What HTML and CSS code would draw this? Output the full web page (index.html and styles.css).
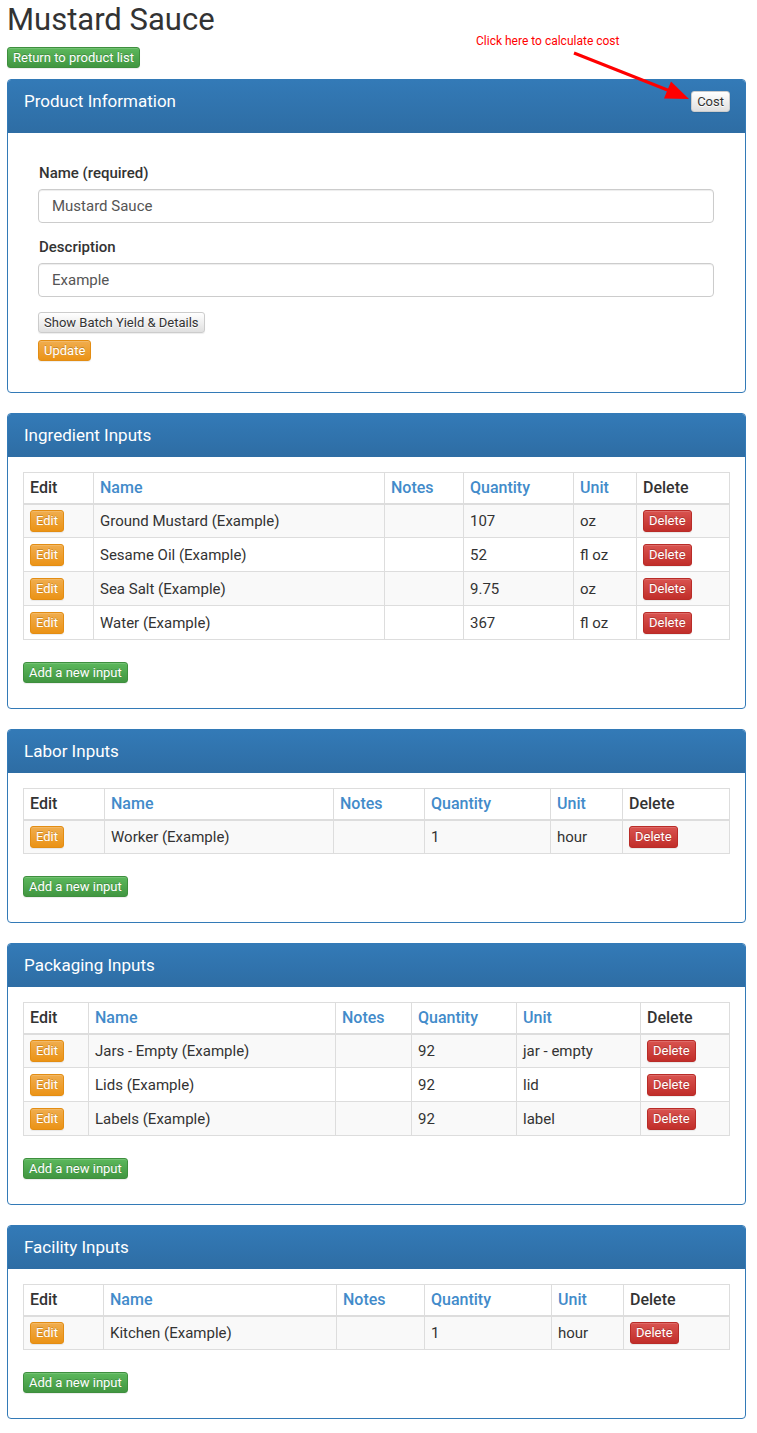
FILE: index.html
```html
<!DOCTYPE html>
<html lang="en">
<head>
<meta charset="utf-8">
<title>Mustard Sauce</title>
<link rel="stylesheet" href="styles.css">
</head>
<body>
<div class="page">
  <h1 class="title">Mustard Sauce</h1>
  <button class="btn btn-success">Return to product list</button>

  <div class="annot">Click here to calculate cost</div>
  <svg class="arrow" width="757" height="120" viewBox="0 0 757 120">
    <line x1="574" y1="53" x2="670" y2="91" stroke="#f00" stroke-width="3"/>
    <polygon points="664,98.5 671,81.5 689,99" fill="#f00"/>
  </svg>

  <section class="panel">
    <div class="panel-heading heading-tall">
      <h3 class="panel-title">Product Information</h3>
      <button class="btn btn-default">Cost</button>
    </div>
    <div class="panel-body form-body">
      <label class="field-label">Name (required)</label>
      <input class="field-input" type="text" value="Mustard Sauce">
      <label class="field-label">Description</label>
      <input class="field-input" type="text" value="Example">
      <div class="form-actions">
        <button class="btn btn-default">Show Batch Yield &amp; Details</button>
        <button class="btn btn-warning">Update</button>
      </div>
    </div>
  </section>

  <section class="panel">
    <div class="panel-heading">
      <h3 class="panel-title">Ingredient Inputs</h3>
    </div>
    <div class="panel-body">
      <table class="grid t-ing">
        <colgroup><col><col><col><col><col><col></colgroup>
        <thead>
          <tr><th>Edit</th><th class="lnk">Name</th><th class="lnk">Notes</th><th class="lnk">Quantity</th><th class="lnk">Unit</th><th>Delete</th></tr>
        </thead>
        <tbody>
          <tr><td><button class="btn btn-warning">Edit</button></td><td>Ground Mustard (Example)</td><td></td><td>107</td><td>oz</td><td><button class="btn btn-danger">Delete</button></td></tr>
          <tr><td><button class="btn btn-warning">Edit</button></td><td>Sesame Oil (Example)</td><td></td><td>52</td><td>fl oz</td><td><button class="btn btn-danger">Delete</button></td></tr>
          <tr><td><button class="btn btn-warning">Edit</button></td><td>Sea Salt (Example)</td><td></td><td>9.75</td><td>oz</td><td><button class="btn btn-danger">Delete</button></td></tr>
          <tr><td><button class="btn btn-warning">Edit</button></td><td>Water (Example)</td><td></td><td>367</td><td>fl oz</td><td><button class="btn btn-danger">Delete</button></td></tr>
        </tbody>
      </table>
      <button class="btn btn-success add-btn">Add a new input</button>
    </div>
  </section>

  <section class="panel">
    <div class="panel-heading">
      <h3 class="panel-title">Labor Inputs</h3>
    </div>
    <div class="panel-body">
      <table class="grid t-lab">
        <colgroup><col><col><col><col><col><col></colgroup>
        <thead>
          <tr><th>Edit</th><th class="lnk">Name</th><th class="lnk">Notes</th><th class="lnk">Quantity</th><th class="lnk">Unit</th><th>Delete</th></tr>
        </thead>
        <tbody>
          <tr><td><button class="btn btn-warning">Edit</button></td><td>Worker (Example)</td><td></td><td>1</td><td>hour</td><td><button class="btn btn-danger">Delete</button></td></tr>
        </tbody>
      </table>
      <button class="btn btn-success add-btn">Add a new input</button>
    </div>
  </section>

  <section class="panel">
    <div class="panel-heading">
      <h3 class="panel-title">Packaging Inputs</h3>
    </div>
    <div class="panel-body">
      <table class="grid t-pack">
        <colgroup><col><col><col><col><col><col></colgroup>
        <thead>
          <tr><th>Edit</th><th class="lnk">Name</th><th class="lnk">Notes</th><th class="lnk">Quantity</th><th class="lnk">Unit</th><th>Delete</th></tr>
        </thead>
        <tbody>
          <tr><td><button class="btn btn-warning">Edit</button></td><td>Jars - Empty (Example)</td><td></td><td>92</td><td>jar - empty</td><td><button class="btn btn-danger">Delete</button></td></tr>
          <tr><td><button class="btn btn-warning">Edit</button></td><td>Lids (Example)</td><td></td><td>92</td><td>lid</td><td><button class="btn btn-danger">Delete</button></td></tr>
          <tr><td><button class="btn btn-warning">Edit</button></td><td>Labels (Example)</td><td></td><td>92</td><td>label</td><td><button class="btn btn-danger">Delete</button></td></tr>
        </tbody>
      </table>
      <button class="btn btn-success add-btn">Add a new input</button>
    </div>
  </section>

  <section class="panel">
    <div class="panel-heading">
      <h3 class="panel-title">Facility Inputs</h3>
    </div>
    <div class="panel-body">
      <table class="grid t-fac">
        <colgroup><col><col><col><col><col><col></colgroup>
        <thead>
          <tr><th>Edit</th><th class="lnk">Name</th><th class="lnk">Notes</th><th class="lnk">Quantity</th><th class="lnk">Unit</th><th>Delete</th></tr>
        </thead>
        <tbody>
          <tr><td><button class="btn btn-warning">Edit</button></td><td>Kitchen (Example)</td><td></td><td>1</td><td>hour</td><td><button class="btn btn-danger">Delete</button></td></tr>
        </tbody>
      </table>
      <button class="btn btn-success add-btn">Add a new input</button>
    </div>
  </section>
</div>
</body>
</html>
```

FILE: styles.css
```css
* { box-sizing: border-box; }

html, body {
  margin: 0;
  padding: 0;
  background: #fff;
}

body {
  font-family: Roboto, "Liberation Sans", sans-serif;
  font-size: 15px;
  color: #333;
}

.page {
  position: relative;
  width: 757px;
  padding: 2px 11px 12px 7px;
}

.title {
  margin: 0 0 9px 0;
  font-size: 31px;
  line-height: 36px;
  font-weight: 400;
  color: #333;
}

/* Buttons */
.btn {
  display: inline-block;
  height: 21px;
  padding: 0 5px;
  font-family: Roboto, "Liberation Sans", sans-serif;
  font-size: 13px;
  line-height: 19px;
  border: 1px solid #ccc;
  border-radius: 3px;
  cursor: pointer;
  white-space: nowrap;
  vertical-align: middle;
  box-shadow: inset 0 1px 0 rgba(255,255,255,.15), 0 1px 1px rgba(0,0,0,.075);
}

.btn-default {
  color: #333;
  background: linear-gradient(#ffffff, #e0e0e0);
  border-color: #ccc;
  text-shadow: 0 1px 0 #fff;
}

.btn-success {
  color: #fff;
  background: linear-gradient(#5cb85c, #419641);
  border-color: #3e8f3e;
  text-shadow: 0 -1px 0 rgba(0,0,0,.2);
}

.btn-warning {
  color: #fff;
  background: linear-gradient(#f0ad4e, #eb9316);
  border-color: #e38d13;
  text-shadow: 0 -1px 0 rgba(0,0,0,.2);
}

.btn-danger {
  color: #fff;
  background: linear-gradient(#d9534f, #c12e2a);
  border-color: #b92c28;
  text-shadow: 0 -1px 0 rgba(0,0,0,.2);
}

/* Annotation overlay */
.annot {
  position: absolute;
  left: 476px;
  top: 33px;
  font-size: 12px;
  line-height: 16px;
  color: #f00;
  white-space: nowrap;
}

.arrow {
  position: absolute;
  left: 0;
  top: 0;
  pointer-events: none;
  z-index: 5;
}

/* Panels */
.panel {
  width: 739px;
  margin: 11px 0 20px 0;
  border: 1px solid #337ab7;
  border-radius: 4px;
  background: #fff;
  overflow: hidden;
}

.panel + .panel { margin-top: 0; }

.panel-heading {
  display: flex;
  justify-content: space-between;
  align-items: flex-start;
  padding: 11px 15px 12px 16px;
  background: linear-gradient(#337ab7, #2e6da4);
  color: #fff;
}

.heading-tall {
  padding-bottom: 21px;
}

.panel-title {
  margin: 0;
  font-size: 17px;
  line-height: 20px;
  font-weight: 400;
}

.panel-body {
  padding: 15px 16px 25px 15px;
}

/* Product form */
.form-body {
  padding: 30px 31px 31px 30px;
}

.field-label {
  display: block;
  font-size: 15px;
  line-height: 20px;
  font-weight: 500;
  margin: 0 0 6px 1px;
}

.field-input {
  display: block;
  width: 100%;
  height: 34px;
  margin: 0 0 14px 0;
  padding: 0 13px;
  font-family: Roboto, "Liberation Sans", sans-serif;
  font-size: 15px;
  color: #555;
  border: 1px solid #ccc;
  border-radius: 4px;
  box-shadow: inset 0 1px 1px rgba(0,0,0,.075);
  background: #fff;
}

.form-actions {
  display: flex;
  flex-direction: column;
  align-items: flex-start;
  gap: 7px;
  padding-top: 1px;
}

/* Tables */
.grid {
  width: 706px;
  table-layout: fixed;
  border-collapse: collapse;
  border: 1px solid #ddd;
  margin-bottom: 22px;
}

.grid th,
.grid td {
  border: 1px solid #ddd;
  padding: 0 6px;
  text-align: left;
  vertical-align: middle;
  white-space: nowrap;
  overflow: hidden;
}

.grid th {
  height: 31px;
  font-size: 16px;
  font-weight: 500;
  color: #333;
  border-bottom: 2px solid #ddd;
}

.grid th.lnk {
  color: #428bca;
}

.grid td {
  height: 34px;
  font-size: 15px;
}

.grid .btn {
  height: 22px;
  line-height: 20px;
}

.grid tbody tr:nth-child(odd) td {
  background: #f9f9f9;
}

.add-btn {
  display: block;
}

/* Column widths per table */
.t-ing col:nth-child(1) { width: 70px; }
.t-ing col:nth-child(2) { width: 291px; }
.t-ing col:nth-child(3) { width: 79px; }
.t-ing col:nth-child(4) { width: 110px; }
.t-ing col:nth-child(5) { width: 63px; }
.t-ing col:nth-child(6) { width: 93px; }

.t-lab col:nth-child(1) { width: 81px; }
.t-lab col:nth-child(2) { width: 229px; }
.t-lab col:nth-child(3) { width: 91px; }
.t-lab col:nth-child(4) { width: 126px; }
.t-lab col:nth-child(5) { width: 72px; }
.t-lab col:nth-child(6) { width: 107px; }

.t-pack col:nth-child(1) { width: 65px; }
.t-pack col:nth-child(2) { width: 247px; }
.t-pack col:nth-child(3) { width: 76px; }
.t-pack col:nth-child(4) { width: 105px; }
.t-pack col:nth-child(5) { width: 124px; }
.t-pack col:nth-child(6) { width: 89px; }

.t-fac col:nth-child(1) { width: 80px; }
.t-fac col:nth-child(2) { width: 233px; }
.t-fac col:nth-child(3) { width: 88px; }
.t-fac col:nth-child(4) { width: 127px; }
.t-fac col:nth-child(5) { width: 72px; }
.t-fac col:nth-child(6) { width: 106px; }
```
